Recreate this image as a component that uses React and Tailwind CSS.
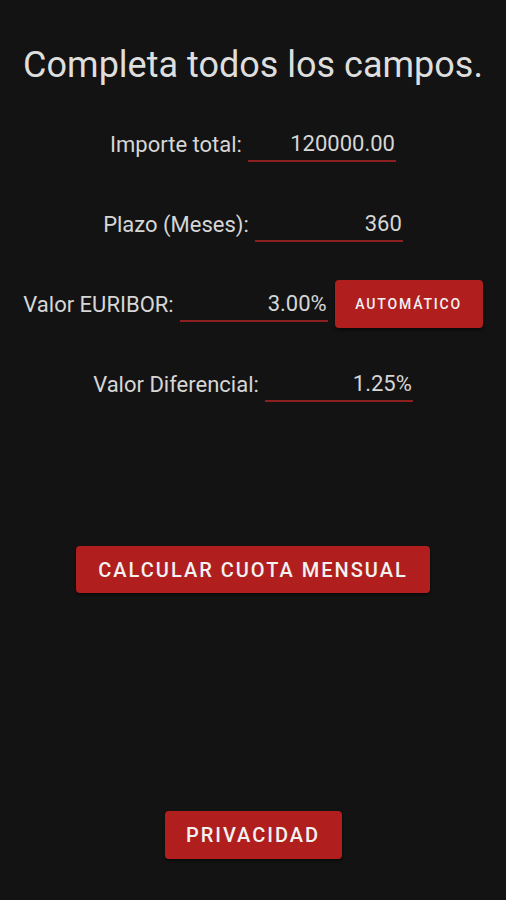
function Field({ label, value }) {
  return (
    <div className="flex h-[48px] items-center gap-[6px]">
      <span className="text-[22px] text-[#d6d6d6]">{label}</span>
      <div className="flex h-[36px] w-[148px] items-center justify-end border-b-2 border-[#8c1f1f] pr-[1px] text-[22px] text-[#d6d6d6]">
        {value}
      </div>
    </div>
  );
}

function RedButton({ children, className }) {
  return (
    <button
      className={
        "rounded-[4px] bg-[#b01e1e] font-medium uppercase text-[#f2f2f2] shadow-[0_2px_3px_rgba(0,0,0,0.5)] " +
        className
      }
    >
      {children}
    </button>
  );
}

export default function App() {
  return (
    <div
      className="flex min-h-[900px] w-full flex-col items-center bg-[#131313]"
      style={{ fontFamily: "Roboto, 'Liberation Sans', sans-serif" }}
    >
      <h1 className="mt-[44px] text-[36px] leading-[42px] text-[#dedede]">
        Completa todos los campos.
      </h1>

      <div className="mt-[34px] flex flex-col items-center gap-[32px]">
        <Field label="Importe total:" value="120000.00" />
        <Field label="Plazo (Meses):" value="360" />
        <div className="flex h-[48px] items-center">
          <Field label="Valor EURIBOR:" value="3.00%" />
          <RedButton className="ml-[7px] h-[48px] w-[148px] text-[14px] font-bold tracking-[0.13em]">
            Automático
          </RedButton>
        </div>
        <Field label="Valor Diferencial:" value="1.25%" />
      </div>

      <RedButton className="mt-[138px] h-[47px] w-[354px] text-[20px] tracking-[0.1em]">
        Calcular cuota mensual
      </RedButton>

      <RedButton className="mt-[218px] h-[48px] w-[177px] text-[20px] tracking-[0.1em]">
        Privacidad
      </RedButton>
    </div>
  );
}
